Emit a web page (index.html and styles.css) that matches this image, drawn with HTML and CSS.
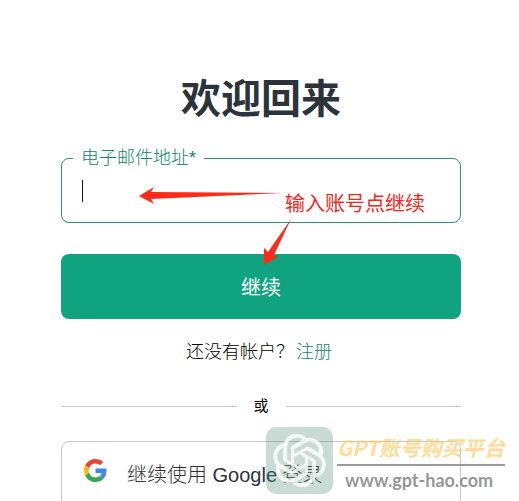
FILE: index.html
```html
<!DOCTYPE html>
<html lang="zh-CN">
<head>
<meta charset="utf-8">
<meta name="viewport" content="width=device-width, initial-scale=1">
<title>欢迎回来</title>
<link rel="stylesheet" href="styles.css">
</head>
<body>
<main class="login">
  <h1 class="title">欢迎回来</h1>
  <form class="form">
    <div class="field">
      <label class="field-label" for="email">电子邮件地址*</label>
      <input class="field-input" id="email" type="email">
      <span class="caret"></span>
    </div>
    <button class="submit" type="submit">继续</button>
  </form>
  <p class="signup">还没有帐户？<a class="signup-link" href="#">注册</a></p>
  <div class="divider">或</div>
  <button class="social" type="button">
    <svg class="google" viewBox="0 0 48 48" aria-hidden="true">
      <path fill="#EA4335" d="M24 9.5c3.54 0 6.71 1.22 9.21 3.6l6.85-6.85C35.9 2.38 30.47 0 24 0 14.62 0 6.51 5.38 2.56 13.22l7.98 6.19C12.43 13.72 17.74 9.5 24 9.5z"/>
      <path fill="#4285F4" d="M46.98 24.55c0-1.57-.15-3.09-.38-4.55H24v9.02h12.94c-.58 2.96-2.26 5.48-4.78 7.18l7.73 6c4.51-4.18 7.09-10.36 7.09-17.65z"/>
      <path fill="#FBBC05" d="M10.53 28.59c-.48-1.45-.76-2.99-.76-4.59s.27-3.14.76-4.59l-7.98-6.19C.92 16.46 0 20.12 0 24c0 3.88.92 7.54 2.56 10.78l7.97-6.19z"/>
      <path fill="#34A853" d="M24 48c6.48 0 11.93-2.13 15.89-5.81l-7.73-6c-2.15 1.45-4.92 2.3-8.16 2.3-6.26 0-11.57-4.22-13.47-9.91l-7.98 6.19C6.51 42.62 14.62 48 24 48z"/>
    </svg>
    <span>继续使用 Google 登录</span>
  </button>

  <svg class="arrows" viewBox="0 0 160 80" aria-hidden="true">
    <path d="M0 10L15 1L12 6L144 7L12 13L15 18Z"/>
    <path d="M152 33L135 69L139 71L125 79L125 62L129 66Z"/>
  </svg>
  <span class="note">输入账号点继续</span>

  <div class="watermark">
    <div class="mark-tile">
      <svg class="mark-icon" viewBox="0 0 24 24" aria-hidden="true"><path d="M22.2819 9.8211a5.9847 5.9847 0 0 0-.5157-4.9108 6.0462 6.0462 0 0 0-6.5098-2.9A6.0651 6.0651 0 0 0 4.9807 4.1818a5.9847 5.9847 0 0 0-3.9977 2.9 6.0462 6.0462 0 0 0 .7427 7.0966 5.98 5.98 0 0 0 .511 4.9107 6.051 6.051 0 0 0 6.5146 2.9001A5.9847 5.9847 0 0 0 13.2599 24a6.0557 6.0557 0 0 0 5.7718-4.2058 5.9894 5.9894 0 0 0 3.9977-2.9001 6.0557 6.0557 0 0 0-.7475-7.0729zm-9.022 12.6081a4.4755 4.4755 0 0 1-2.8764-1.0408l.1419-.0804 4.7783-2.7582a.7948.7948 0 0 0 .3927-.6813v-6.7369l2.02 1.1686a.071.071 0 0 1 .038.052v5.5826a4.504 4.504 0 0 1-4.4945 4.4944zm-9.6607-4.1254a4.4708 4.4708 0 0 1-.5346-3.0137l.142.0852 4.783 2.7582a.7712.7712 0 0 0 .7806 0l5.8428-3.3685v2.3324a.0804.0804 0 0 1-.0332.0615L9.74 19.9502a4.4992 4.4992 0 0 1-6.1408-1.6464zM2.3408 7.8956a4.485 4.485 0 0 1 2.3655-1.9728V11.6a.7664.7664 0 0 0 .3879.6765l5.8144 3.3543-2.0201 1.1685a.0757.0757 0 0 1-.071 0l-4.8303-2.7865A4.504 4.504 0 0 1 2.3408 7.872zm16.5963 3.8558L13.1038 8.364 15.1192 7.2a.0757.0757 0 0 1 .071 0l4.8303 2.7913a4.4944 4.4944 0 0 1-.6765 8.1042v-5.6772a.79.79 0 0 0-.407-.667zm2.0107-3.0231l-.142-.0852-4.7735-2.7818a.7759.7759 0 0 0-.7854 0L9.409 9.2297V6.8974a.0662.0662 0 0 1 .0284-.0615l4.8303-2.7866a4.4992 4.4992 0 0 1 6.6802 4.66zM8.3065 12.863l-2.02-1.1638a.0804.0804 0 0 1-.038-.0567V6.0742a4.4992 4.4992 0 0 1 7.3757-3.4537l-.142.0805L8.704 5.459a.7948.7948 0 0 0-.3927.6813zm1.0976-2.3654l2.602-1.4998 2.6069 1.4998v2.9994l-2.5974 1.4997-2.6067-1.4997Z"/></svg>
    </div>
    <div class="mark-text">
      <span class="mark-name">GPT账号购买平台</span>
      <span class="mark-url">www.gpt-hao.com</span>
    </div>
  </div>
</main>
</body>
</html>
```

FILE: styles.css
```css
* {
  box-sizing: border-box;
}

body {
  margin: 0;
  height: 100vh;
  overflow: hidden;
  padding-left: 3px;
  background: #fff;
  color: #000;
  font-family: "Liberation Sans", "Noto Sans CJK SC", sans-serif;
  font-weight: 300;
}

button,
input {
  font: inherit;
}

.login {
  position: relative;
  max-width: 400px;
  margin: 0 auto;
  padding-top: 75px;
}

.title {
  margin: 0 0 35px;
  color: #2d333a;
  font-size: 40px;
  font-weight: 700;
  line-height: 48px;
  text-align: center;
}

.field {
  position: relative;
}

.field-label {
  position: absolute;
  top: -12px;
  left: 12px;
  padding: 0 8px;
  background: #fff;
  color: #10856a;
  font-size: 18px;
  line-height: 24px;
}

.field-input {
  display: block;
  width: 100%;
  height: 65px;
  padding: 0 20px;
  border: 1px solid #2a9574;
  border-radius: 8px;
  outline: none;
  background: #fff;
  font-size: 20px;
}

.caret {
  position: absolute;
  top: 22px;
  left: 21px;
  width: 1px;
  height: 22px;
  background: #111;
}

.submit {
  display: block;
  width: 100%;
  height: 65px;
  margin-top: 31px;
  border: 0;
  border-radius: 8px;
  background: #10a37f;
  color: #fff;
  font-size: 20px;
  font-weight: 400;
}

.signup {
  margin: 21px 0 0;
  padding-right: 4px;
  font-size: 18px;
  line-height: 24px;
  text-align: center;
}

.signup-link {
  margin-left: 2px;
  color: #10856a;
  text-decoration: none;
}

.divider {
  display: flex;
  align-items: center;
  gap: 17px;
  margin: 30px 0 23px;
  font-size: 15px;
  font-weight: 400;
  line-height: 24px;
}

.divider::before,
.divider::after {
  flex: 1;
  height: 1px;
  background: #c4c8cc;
  content: "";
}

.social {
  display: flex;
  align-items: center;
  gap: 20px;
  width: 100%;
  height: 65px;
  padding: 0 22px;
  border: 1px solid #c4c8cc;
  border-radius: 8px;
  background: #fff;
  color: #2d333a;
  font-size: 20px;
}

.google {
  width: 23px;
  height: 23px;
  margin-bottom: 6px;
}

.arrows {
  position: absolute;
  top: 186px;
  left: 78px;
  width: 160px;
  height: 80px;
  fill: #ff2a1a;
}

.note {
  position: absolute;
  top: 190px;
  left: 224px;
  color: #f0281c;
  font-size: 20px;
  font-weight: 400;
  line-height: 28px;
  white-space: nowrap;
}

.watermark {
  position: absolute;
  top: 427px;
  left: 205px;
  display: flex;
  gap: 4px;
  white-space: nowrap;
}

.mark-tile {
  display: grid;
  place-items: center;
  width: 67px;
  height: 67px;
  border-radius: 10px;
  background: rgb(75 135 115 / 30%);
}

.mark-icon {
  width: 53px;
  height: 53px;
  fill: rgb(255 255 255 / 80%);
  stroke: rgb(255 255 255 / 50%);
  stroke-width: 0.4;
}

.mark-text {
  display: flex;
  flex-direction: column;
  padding-top: 6px;
  font-family: "Noto Sans CJK SC", sans-serif;
  font-weight: 700;
}

.mark-name {
  padding-bottom: 3px;
  border-bottom: 2px solid #999;
  color: rgb(255 205 105 / 70%);
  font-size: 21px;
  font-style: italic;
  line-height: 28px;
}

.mark-url {
  padding-left: 8px;
  color: rgb(115 115 115 / 75%);
  font-family: Lato, sans-serif;
  font-size: 18px;
  line-height: 28px;
}
```
